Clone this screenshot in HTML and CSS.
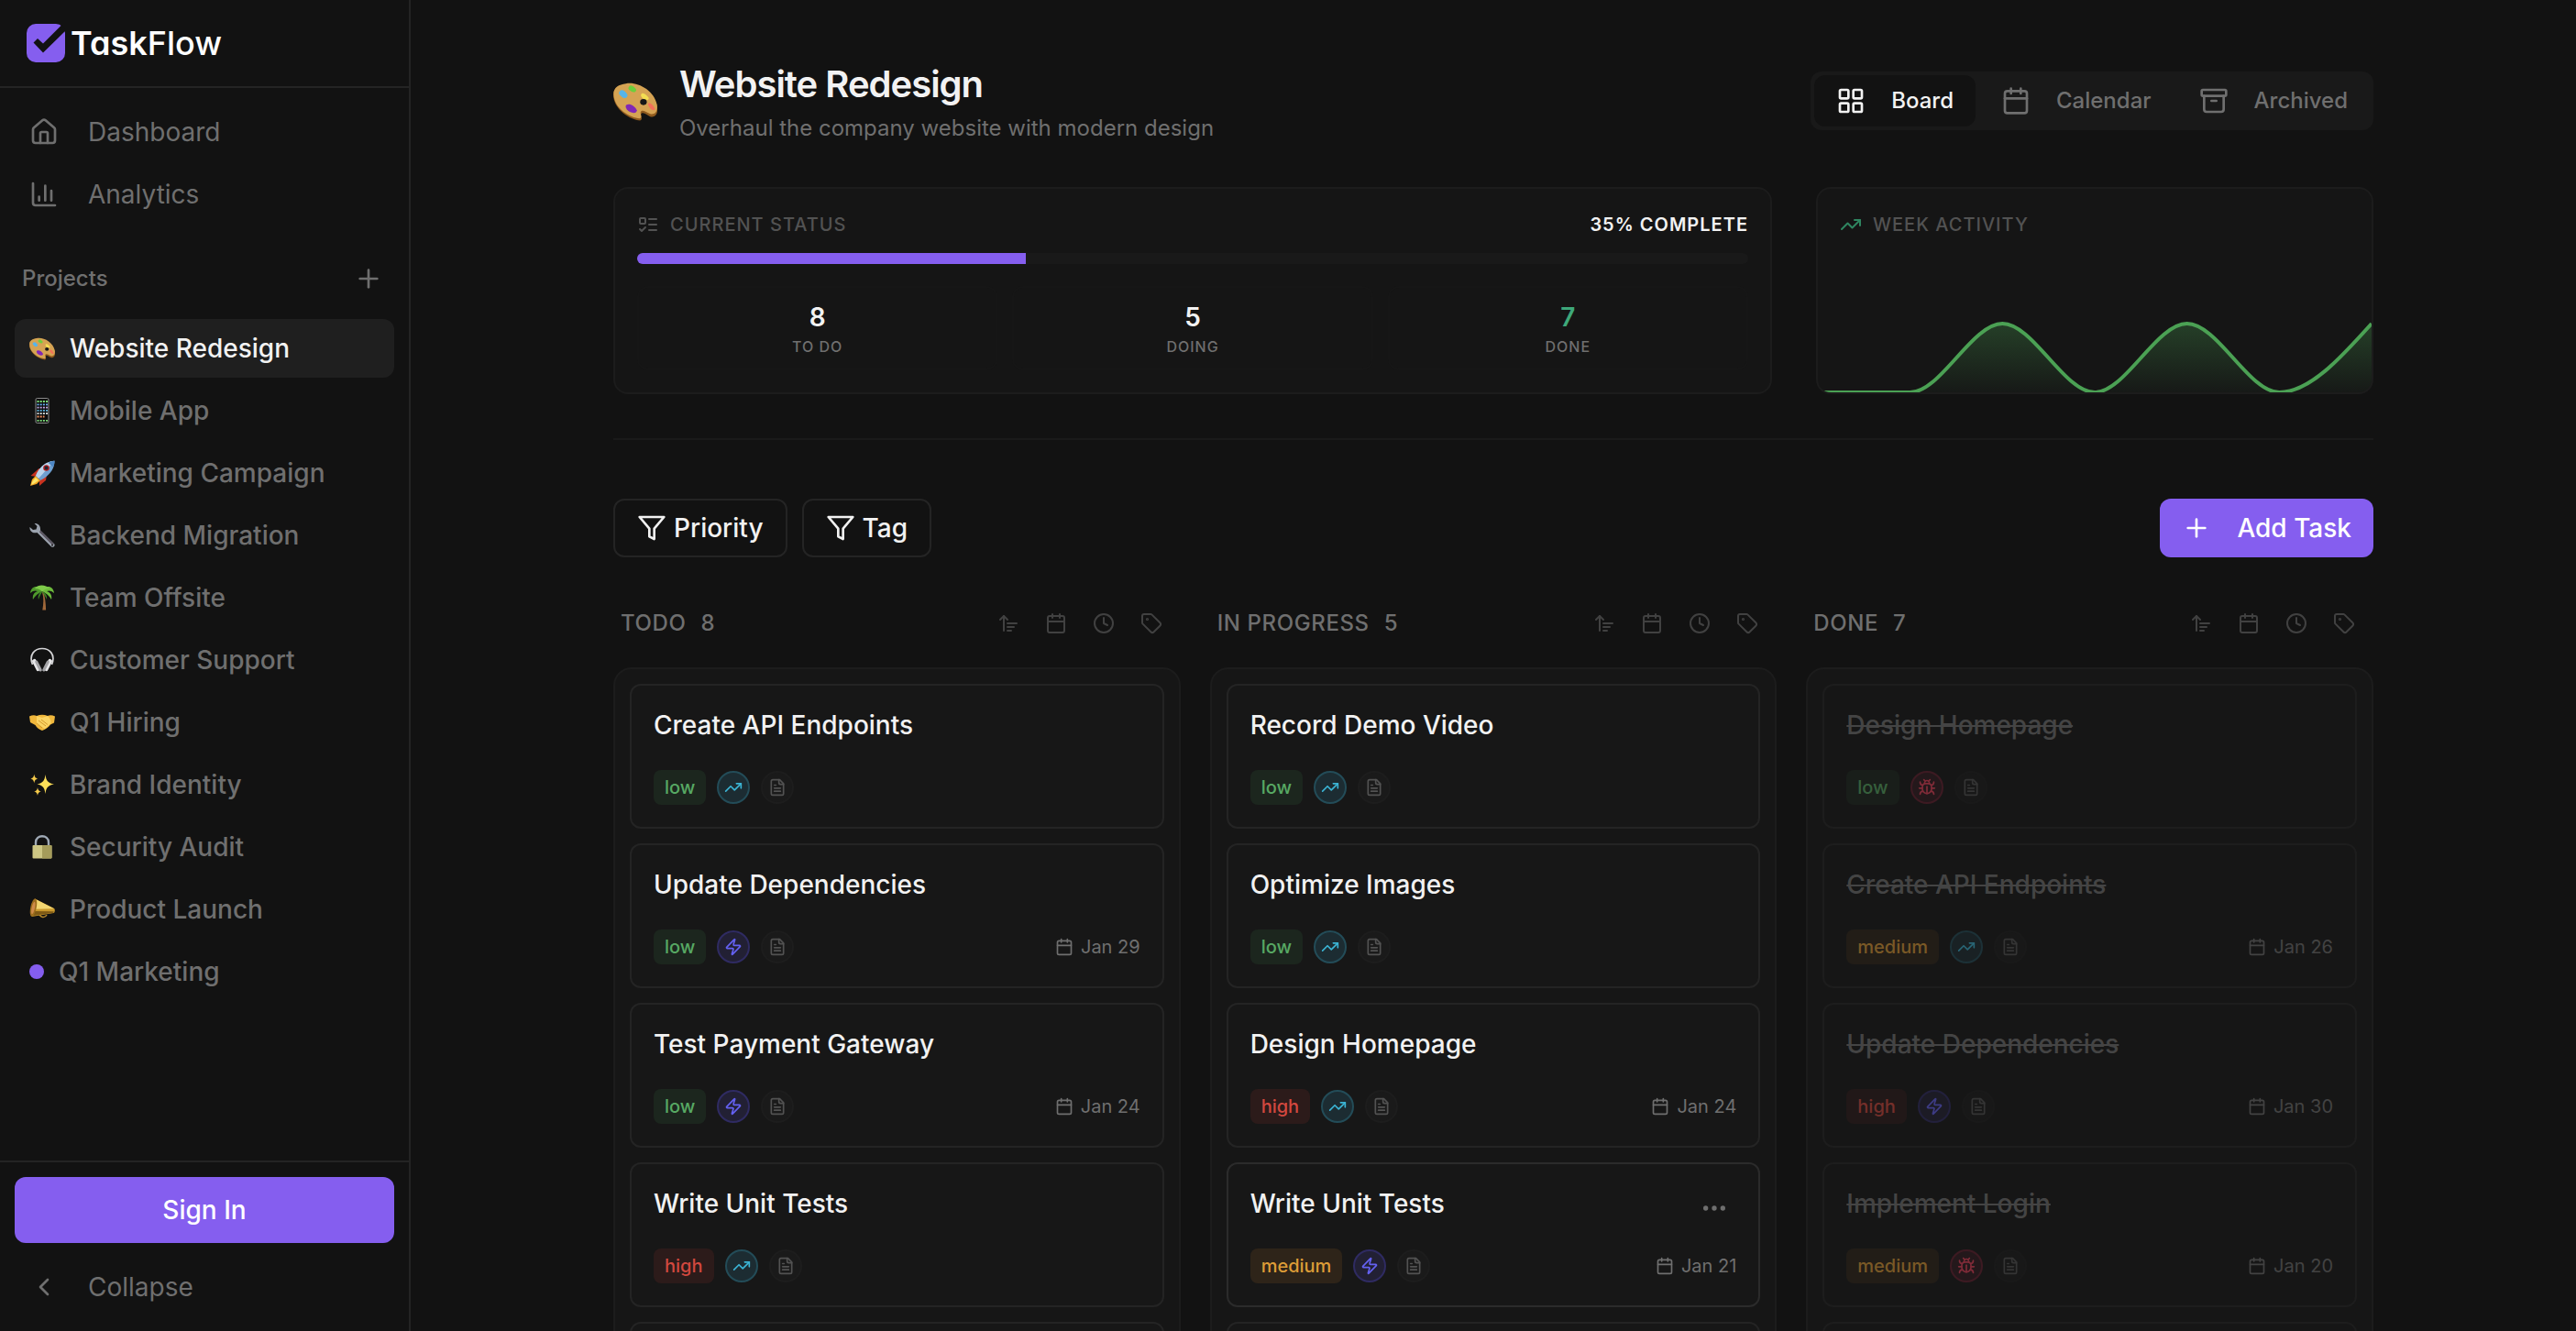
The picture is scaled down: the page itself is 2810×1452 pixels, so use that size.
FILE: index.html
```html
<!DOCTYPE html>
<html lang="en">
<head>
<meta charset="utf-8">
<meta name="viewport" content="width=device-width, initial-scale=1">
<title>TaskFlow – Website Redesign</title>
<link rel="stylesheet" href="styles.css">
</head>
<body>
<svg class="sprite" aria-hidden="true">
  <symbol id="i-home" viewBox="0 0 24 24"><path d="M15 21v-8a1 1 0 0 0-1-1h-4a1 1 0 0 0-1 1v8"/><path d="M3 10a2 2 0 0 1 .709-1.528l7-5.999a2 2 0 0 1 2.582 0l7 5.999A2 2 0 0 1 21 10v9a2 2 0 0 1-2 2H5a2 2 0 0 1-2-2z"/></symbol>
  <symbol id="i-chart" viewBox="0 0 24 24"><path d="M3 3v16a2 2 0 0 0 2 2h16"/><path d="M18 17V9"/><path d="M13 17V5"/><path d="M8 17v-3"/></symbol>
  <symbol id="i-plus" viewBox="0 0 24 24"><path d="M5 12h14"/><path d="M12 5v14"/></symbol>
  <symbol id="i-left" viewBox="0 0 24 24"><path d="m15 18-6-6 6-6"/></symbol>
  <symbol id="i-grid" viewBox="0 0 24 24"><rect width="7" height="7" x="3" y="3" rx="1"/><rect width="7" height="7" x="14" y="3" rx="1"/><rect width="7" height="7" x="14" y="14" rx="1"/><rect width="7" height="7" x="3" y="14" rx="1"/></symbol>
  <symbol id="i-cal" viewBox="0 0 24 24"><path d="M8 2v4"/><path d="M16 2v4"/><rect width="18" height="18" x="3" y="4" rx="2"/><path d="M3 10h18"/></symbol>
  <symbol id="i-archive" viewBox="0 0 24 24"><rect width="20" height="5" x="2" y="3" rx="1"/><path d="M4 8v11a2 2 0 0 0 2 2h12a2 2 0 0 0 2-2V8"/><path d="M10 12h4"/></symbol>
  <symbol id="i-todo" viewBox="0 0 24 24"><rect x="3" y="5" width="6" height="6" rx="1"/><path d="m3 17 2 2 4-4"/><path d="M13 6h8"/><path d="M13 12h8"/><path d="M13 18h8"/></symbol>
  <symbol id="i-trend" viewBox="0 0 24 24"><path d="M22 7 13.5 15.500l-5-5L2 17"/><path d="M16 7h6v6"/></symbol>
  <symbol id="i-filter" viewBox="0 0 24 24"><path d="M22 3H2l8 9.460V19l4 2v-8.540z"/></symbol>
  <symbol id="i-sort" viewBox="0 0 24 24"><path d="m3 8 4-4 4 4"/><path d="M7 4v16"/><path d="M11 12h10"/><path d="M11 16h7"/><path d="M11 20h4"/></symbol>
  <symbol id="i-clock" viewBox="0 0 24 24"><circle cx="12" cy="12" r="10"/><path d="M12 6v6l4 2"/></symbol>
  <symbol id="i-tag" viewBox="0 0 24 24"><path d="M12.586 2.586A2 2 0 0 0 11.172 2H4a2 2 0 0 0-2 2v7.172a2 2 0 0 0 .586 1.414l8.704 8.704a2.426 2.426 0 0 0 3.420 0l6.580-6.580a2.426 2.426 0 0 0 0-3.420z"/><circle cx="7.500" cy="7.500" r=".6"/></symbol>
  <symbol id="i-zap" viewBox="0 0 24 24"><path d="M4 14a1 1 0 0 1-.780-1.630l9.900-10.200a.5.5 0 0 1 .860.460l-1.920 6.020A1 1 0 0 0 13 10h7a1 1 0 0 1 .780 1.630l-9.900 10.200a.5.5 0 0 1-.860-.460l1.920-6.020A1 1 0 0 0 11 14z"/></symbol>
  <symbol id="i-doc" viewBox="0 0 24 24"><path d="M15 2H6a2 2 0 0 0-2 2v16a2 2 0 0 0 2 2h12a2 2 0 0 0 2-2V7Z"/><path d="M14 2v4a2 2 0 0 0 2 2h4"/><path d="M10 9H8"/><path d="M16 13H8"/><path d="M16 17H8"/></symbol>
  <symbol id="i-bug" viewBox="0 0 24 24"><path d="m8 2 1.880 1.880"/><path d="M14.120 3.880 16 2"/><path d="M9 7.130v-1a3.003 3.003 0 1 1 6 0v1"/><path d="M12 20c-3.300 0-6-2.700-6-6v-3a4 4 0 0 1 4-4h4a4 4 0 0 1 4 4v3c0 3.300-2.700 6-6 6"/><path d="M12 20v-9"/><path d="M6.530 9C4.600 8.800 3 7.100 3 5"/><path d="M6 13H2"/><path d="M3 21c0-2.100 1.700-3.900 3.800-4"/><path d="M20.970 5c0 2.100-1.600 3.800-3.500 4"/><path d="M22 13h-4"/><path d="M17.200 17c2.100.1 3.800 1.900 3.800 4"/></symbol>
  <symbol id="i-more" viewBox="0 0 24 24"><circle cx="5" cy="12" r="1"/><circle cx="12" cy="12" r="1"/><circle cx="19" cy="12" r="1"/></symbol>

  <symbol id="e-palette" viewBox="0 0 28 28"><path d="M8 3.500C15 2 26 8 28 17.500c.8 5-1.500 7.500-4.500 6.500-2-.7-4-3-5.500-2-1.500 1 1.500 3.500-1 4.500C11 26 0 19.500 0 10 0 6 3.500 4 8 3.500z" fill="#8f5a1e"/><path d="M8 3C15 1.500 26 7 27.800 16.500c.7 4.500-1.500 6.500-4.300 5.800-2-.6-4-2.800-5.700-1.800-1.500 1.200 1.300 3.800-1 4.700C11 25 .2 19 .2 9.500.2 5.500 3.500 3.500 8 3z" fill="#d5a353"/><path d="M4 8c2-2 3.500 0 5 2 .5 2-2 3-3.500 1.500S3 9.500 4 8z" fill="#57b5ea"/><path d="M10 5c1.500-1.800 3 .3 4.500 1.500.5 1.800-1.500 2.500-3 1.500S9 6.500 10 5z" fill="#6ccf3c"/><path d="M18 9.500c1.500-1 3 1 4.500 2.500.5 1.500-1.500 2-3 1S17 10.500 18 9.500z" fill="#f3dd52"/><path d="M22.500 15.500c1.500-.5 3 1.500 4 3.500 0 1.500-1.800 1-2.800 0s-2.200-3-1.200-3.500z" fill="#f4705a"/><path d="M8.500 16.500c2-1 5 .5 6.500 3.500 0 2-2.500 2-4.500 1s-3.500-3.500-2-4.500z" fill="#8127b5"/><ellipse cx="19.200" cy="14.800" rx="2.100" ry="1.900" fill="#171717"/></symbol>
  <symbol id="e-phone" viewBox="0 0 28 28"><rect x="7" y=".5" width="14" height="27" rx="1.500" fill="#0c0c0c" stroke="#8a8a8a"/><g fill="none" stroke-width="1.800" stroke-dasharray="2 1.200"><path d="M8.500 4h11.500" stroke="#7fe07a"/><path d="M8.500 7.300h11.500" stroke="#6ab5f6"/><path d="M8.500 10.600h11.500" stroke="#c8abe8"/><path d="M8.500 13.900h11.500" stroke="#5fb4dd"/><path d="M8.500 17.200h11.500" stroke="#dfe8e9"/><path d="M8.500 20.500h8" stroke="#f0905f"/><path d="M8.500 24.800h11.500" stroke="#7ee07a"/></g></symbol>
  <symbol id="e-rocket" viewBox="0 0 28 28"><path d="M1.500 17l9-8 3 1-6 8z" fill="#c8321f"/><path d="M11 22l8-6-1 6-7 6z" fill="#c8321f"/><path d="M7 17l5 5-4 4-7 2 2-7z" fill="#f7a823"/><path d="M7 19l3 3-4 3-4 2 1.500-4z" fill="#fbe66a"/><path d="M7 17C10 9 17 1.500 27.500.8 27.500 11 20 18 12 22z" fill="#6f9fd0"/><path d="M7 17C10 9 17 1.500 27.500.8L10 20z" fill="#bcd3ea"/><path d="M20.500 2.700C23 1.500 25.500 1 27.500.8c0 2.500-.5 4.700-1.500 6.700z" fill="#4d87c4"/><circle cx="18.500" cy="8.500" r="3.300" fill="#b01e20"/><circle cx="18.500" cy="8.500" r="1.900" fill="#1c2634"/></symbol>
  <symbol id="e-wrench" viewBox="0 0 28 28"><path d="M.5 5C0 9 3.500 12.500 8.500 11L24 26.500c2 1.200 4.500-.8 3.300-3L12 8.500C12.500 4 10 .8 5.500 1L8.500 4l-1 3.500L4 8z" fill="#9aa2ad"/><path d="M12 8.500l15 15-2 1-14-14z" fill="#5b5560"/><circle cx="25" cy="24.700" r="1" fill="#222"/></symbol>
  <symbol id="e-palm" viewBox="0 0 28 28"><path d="M14 8c2 6 1.500 13 .3 19.500h3.800C18 20 17 13 15.500 8z" fill="#a0683a"/><path d="M14 7C10-.5 2 1 1 9c3-3 6-3 8-2-4 1-6 5-5 9 2-4 6-7 10-9z" fill="#4f9a2c"/><path d="M14 7c4-7.500 12-6 13 2-3-3-6-3-8-2 4 1 6 5 5 9-2-4-6-7-10-9z" fill="#6dbb3c"/><path d="M6 4c4-5 12-4 16 0-4 0-6 1-8 4-2-3-4-4-8-4z" fill="#7fcb4a"/><path d="M12 8c-2 2-3 5-2 8 1-3 2-5 4-8 2 3 4 5 5 8 .5-4-1-7-4-8z" fill="#3c7f24"/></symbol>
  <symbol id="e-headphones" viewBox="0 0 28 28"><path d="M3.500 19C-1 8 6 1.500 14 1.500S29 8 24.500 19" fill="none" stroke="#d4d4d6" stroke-width="1.700"/><g fill="#e6e6e8"><rect x="5.200" y="12.500" width="4.600" height="14" rx="2" transform="rotate(-27 7.500 19.500)"/><rect x="18.200" y="12.500" width="4.600" height="14" rx="2" transform="rotate(27 20.500 19.500)"/></g><g fill="#a3a3a6"><rect x="8.500" y="14" width="3" height="13" rx="1.500" transform="rotate(-27 10 20.500)"/><rect x="16.500" y="14" width="3" height="13" rx="1.500" transform="rotate(27 18 20.500)"/></g></symbol>
  <symbol id="e-hands" viewBox="0 0 28 28"><path d="M0 7.500C3 6 6 6 8 7c4-1.800 8-1.800 12 0 2-1 5-1 8 .5l-1 7-4 2c-2 3-5 5-9 6.500C11 22 8 20 6.500 17L1 14z" fill="#f0b73c"/><path d="M8 7l6 2 6-2c2 2 4 5 3.500 8L17 21 8 16z" fill="#fbd464"/><path d="M10 12l8 6M13 11l7 5.500M8 15l6 5" stroke="#c98a1e" stroke-width=".8" fill="none"/></symbol>
  <symbol id="e-sparkle" viewBox="0 0 28 28"><path d="M17.500 3c1 7 2.500 9 9.500 10.500-7 1.500-8.500 3.500-9.500 10.500-1-7-2.500-9-9-10.500 6.500-1.500 8-3.500 9-10.500z" fill="#fddf58"/><path d="M5.300 2.500c.6 3.300 1.200 4.200 4 5-2.800.8-3.400 1.700-4 5-.6-3.300-1.200-4.200-4-5 2.800-.8 3.400-1.700 4-5zM9 17c.5 3 1.200 3.800 3.800 4.500C10.200 22.200 9.500 23 9 26c-.5-3-1.200-3.800-3.800-4.500C7.800 20.800 8.500 20 9 17z" fill="#f3c94a"/></symbol>
  <symbol id="e-lock" viewBox="0 0 28 28"><path d="M7 14V9c0-9 14-9 14 0v5" fill="none" stroke="#9fa9b5" stroke-width="2.400"/><rect x="3.500" y="12" width="21" height="14.500" rx="1" fill="#cdc684"/><path d="M14 12h9.500a1 1 0 0 1 1 1v12.500a1 1 0 0 1-1 1H14z" fill="#a59c5b"/></symbol>
  <symbol id="e-horn" viewBox="0 0 28 28"><path d="M11 19c1 4 6 5 8 1" fill="none" stroke="#b4862a" stroke-width="1.500"/><path d="M6 2.500L27 13c1.200.7 1 4.500-.5 5L2.500 22z" fill="#c9992d"/><path d="M7 3L27 13.200l-21 .5z" fill="#f2d671"/><path d="M6 16l20.500.3v1.500L4 21z" fill="#7f5a15"/><ellipse cx="4.500" cy="12" rx="3.200" ry="10" fill="#9c6d1d" transform="rotate(12 4.500 12)"/><ellipse cx="4.300" cy="12.500" rx="1.700" ry="7" fill="#cf8b4a" transform="rotate(12 4.300 12.500)"/></symbol>
</svg>

<div class="app">
  <aside class="sidebar">
    <div class="brand">
      <svg class="brand-mark" viewBox="0 0 42 42" aria-hidden="true"><rect width="42" height="42" rx="10" fill="#855eef"/><path d="M7.500 20.500 12 16l6 5.500L38.500 1 43 7 18 31.500z" fill="#121212"/></svg>
      <span class="brand-name"><b>Task</b>Flow</span>
    </div>
    <nav class="nav">
      <a class="row" href="#"><svg class="icon md"><use href="#i-home"/></svg>Dashboard</a>
      <a class="row" href="#"><svg class="icon md"><use href="#i-chart"/></svg>Analytics</a>
    </nav>
    <section class="projects">
      <div class="projects-head">
        <h2>Projects</h2>
        <button class="icon-btn" type="button" aria-label="Add project"><svg class="icon md"><use href="#i-plus"/></svg></button>
      </div>
      <div class="project-list">
        <a class="row project active" href="#"><svg class="emoji"><use href="#e-palette"/></svg>Website Redesign</a>
        <a class="row project" href="#"><svg class="emoji"><use href="#e-phone"/></svg>Mobile App</a>
        <a class="row project" href="#"><svg class="emoji"><use href="#e-rocket"/></svg>Marketing Campaign</a>
        <a class="row project" href="#"><svg class="emoji"><use href="#e-wrench"/></svg>Backend Migration</a>
        <a class="row project" href="#"><svg class="emoji"><use href="#e-palm"/></svg>Team Offsite</a>
        <a class="row project" href="#"><svg class="emoji"><use href="#e-headphones"/></svg>Customer Support</a>
        <a class="row project" href="#"><svg class="emoji"><use href="#e-hands"/></svg>Q1 Hiring</a>
        <a class="row project" href="#"><svg class="emoji"><use href="#e-sparkle"/></svg>Brand Identity</a>
        <a class="row project" href="#"><svg class="emoji"><use href="#e-lock"/></svg>Security Audit</a>
        <a class="row project" href="#"><svg class="emoji"><use href="#e-horn"/></svg>Product Launch</a>
        <a class="row project" href="#"><span class="dot"></span>Q1 Marketing</a>
      </div>
    </section>
    <div class="sidebar-foot">
      <button class="primary sign-in" type="button">Sign In</button>
      <button class="row collapse" type="button"><svg class="icon md"><use href="#i-left"/></svg>Collapse</button>
    </div>
  </aside>

  <main class="main">
    <div class="container">
      <header class="page-head">
        <svg class="emoji page-emoji"><use href="#e-palette"/></svg>
        <div class="page-title">
          <h1>Website Redesign</h1>
          <p>Overhaul the company website with modern design</p>
        </div>
        <div class="tabs">
          <button class="tab active" type="button"><svg class="icon md"><use href="#i-grid"/></svg>Board</button>
          <button class="tab" type="button"><svg class="icon md"><use href="#i-cal"/></svg>Calendar</button>
          <button class="tab" type="button"><svg class="icon md"><use href="#i-archive"/></svg>Archived</button>
        </div>
      </header>

      <section class="summary">
        <div class="panel status">
          <div class="panel-head">
            <svg class="icon sm"><use href="#i-todo"/></svg><h2>Current Status</h2>
            <span class="complete">35% Complete</span>
          </div>
          <div class="progress"><div class="progress-fill" style="width:35%"></div></div>
          <div class="stats">
            <div class="stat"><strong>8</strong><span>To Do</span></div>
            <div class="stat"><strong>5</strong><span>Doing</span></div>
            <div class="stat done"><strong>7</strong><span>Done</span></div>
          </div>
        </div>
        <div class="panel activity">
          <div class="panel-head">
            <svg class="icon sm trend"><use href="#i-trend"/></svg><h2>Week Activity</h2>
          </div>
          <svg class="chart" viewBox="0 0 600 80" preserveAspectRatio="none" aria-hidden="true">
            <defs><linearGradient id="fade" x1="0" y1="0" x2="0" y2="1"><stop offset="0" stop-color="#4ba154" stop-opacity=".3"/><stop offset="1" stop-color="#4ba154" stop-opacity=".03"/></linearGradient></defs>
            <path fill="url(#fade)" d="M0 80H100C133 80 167 5 200 5S267 80 300 80 367 5 400 5 467 80 500 80 567 42 600 5V80Z"/>
            <path class="chart-line" d="M0 80H100C133 80 167 5 200 5S267 80 300 80 367 5 400 5 467 80 500 80 567 42 600 5"/>
          </svg>
        </div>
      </section>

      <hr class="divider">

      <div class="toolbar">
        <button class="filter" type="button"><svg class="icon md"><use href="#i-filter"/></svg>Priority</button>
        <button class="filter" type="button"><svg class="icon md"><use href="#i-filter"/></svg>Tag</button>
        <button class="primary add" type="button"><svg class="icon md"><use href="#i-plus"/></svg>Add Task</button>
      </div>

      <section class="board">
        <div class="column">
          <div class="column-head">
            <h2>Todo</h2><span class="count">8</span>
            <div class="sorts">
              <button type="button" aria-label="Sort by priority"><svg class="icon sm"><use href="#i-sort"/></svg></button>
              <button type="button" aria-label="Sort by due date"><svg class="icon sm"><use href="#i-cal"/></svg></button>
              <button type="button" aria-label="Sort by created"><svg class="icon sm"><use href="#i-clock"/></svg></button>
              <button type="button" aria-label="Sort by tag"><svg class="icon sm"><use href="#i-tag"/></svg></button>
            </div>
          </div>
          <div class="lane">
            <article class="task">
              <h3>Create API Endpoints</h3>
              <div class="meta"><span class="badge low">low</span><span class="chip cyan"><svg class="icon xs"><use href="#i-trend"/></svg></span><span class="chip"><svg class="icon xs"><use href="#i-doc"/></svg></span></div>
            </article>
            <article class="task">
              <h3>Update Dependencies</h3>
              <div class="meta"><span class="badge low">low</span><span class="chip indigo"><svg class="icon xs"><use href="#i-zap"/></svg></span><span class="chip"><svg class="icon xs"><use href="#i-doc"/></svg></span><time class="due"><svg class="icon xs"><use href="#i-cal"/></svg>Jan 29</time></div>
            </article>
            <article class="task">
              <h3>Test Payment Gateway</h3>
              <div class="meta"><span class="badge low">low</span><span class="chip indigo"><svg class="icon xs"><use href="#i-zap"/></svg></span><span class="chip"><svg class="icon xs"><use href="#i-doc"/></svg></span><time class="due"><svg class="icon xs"><use href="#i-cal"/></svg>Jan 24</time></div>
            </article>
            <article class="task">
              <h3>Write Unit Tests</h3>
              <div class="meta"><span class="badge high">high</span><span class="chip cyan"><svg class="icon xs"><use href="#i-trend"/></svg></span><span class="chip"><svg class="icon xs"><use href="#i-doc"/></svg></span></div>
            </article>
            <article class="task"></article>
          </div>
        </div>

        <div class="column">
          <div class="column-head">
            <h2>In Progress</h2><span class="count">5</span>
            <div class="sorts">
              <button type="button" aria-label="Sort by priority"><svg class="icon sm"><use href="#i-sort"/></svg></button>
              <button type="button" aria-label="Sort by due date"><svg class="icon sm"><use href="#i-cal"/></svg></button>
              <button type="button" aria-label="Sort by created"><svg class="icon sm"><use href="#i-clock"/></svg></button>
              <button type="button" aria-label="Sort by tag"><svg class="icon sm"><use href="#i-tag"/></svg></button>
            </div>
          </div>
          <div class="lane">
            <article class="task">
              <h3>Record Demo Video</h3>
              <div class="meta"><span class="badge low">low</span><span class="chip cyan"><svg class="icon xs"><use href="#i-trend"/></svg></span><span class="chip"><svg class="icon xs"><use href="#i-doc"/></svg></span></div>
            </article>
            <article class="task">
              <h3>Optimize Images</h3>
              <div class="meta"><span class="badge low">low</span><span class="chip cyan"><svg class="icon xs"><use href="#i-trend"/></svg></span><span class="chip"><svg class="icon xs"><use href="#i-doc"/></svg></span></div>
            </article>
            <article class="task">
              <h3>Design Homepage</h3>
              <div class="meta"><span class="badge high">high</span><span class="chip cyan"><svg class="icon xs"><use href="#i-trend"/></svg></span><span class="chip"><svg class="icon xs"><use href="#i-doc"/></svg></span><time class="due"><svg class="icon xs"><use href="#i-cal"/></svg>Jan 24</time></div>
            </article>
            <article class="task hovered">
              <h3>Write Unit Tests</h3>
              <button class="more" type="button" aria-label="Task options"><svg class="icon md"><use href="#i-more"/></svg></button>
              <div class="meta"><span class="badge medium">medium</span><span class="chip indigo"><svg class="icon xs"><use href="#i-zap"/></svg></span><span class="chip"><svg class="icon xs"><use href="#i-doc"/></svg></span><time class="due"><svg class="icon xs"><use href="#i-cal"/></svg>Jan 21</time></div>
            </article>
            <article class="task"></article>
          </div>
        </div>

        <div class="column">
          <div class="column-head">
            <h2>Done</h2><span class="count">7</span>
            <div class="sorts">
              <button type="button" aria-label="Sort by priority"><svg class="icon sm"><use href="#i-sort"/></svg></button>
              <button type="button" aria-label="Sort by due date"><svg class="icon sm"><use href="#i-cal"/></svg></button>
              <button type="button" aria-label="Sort by created"><svg class="icon sm"><use href="#i-clock"/></svg></button>
              <button type="button" aria-label="Sort by tag"><svg class="icon sm"><use href="#i-tag"/></svg></button>
            </div>
          </div>
          <div class="lane">
            <article class="task finished">
              <h3>Design Homepage</h3>
              <div class="meta"><span class="badge low">low</span><span class="chip rose"><svg class="icon xs"><use href="#i-bug"/></svg></span><span class="chip"><svg class="icon xs"><use href="#i-doc"/></svg></span></div>
            </article>
            <article class="task finished">
              <h3>Create API Endpoints</h3>
              <div class="meta"><span class="badge medium">medium</span><span class="chip cyan"><svg class="icon xs"><use href="#i-trend"/></svg></span><span class="chip"><svg class="icon xs"><use href="#i-doc"/></svg></span><time class="due"><svg class="icon xs"><use href="#i-cal"/></svg>Jan 26</time></div>
            </article>
            <article class="task finished">
              <h3>Update Dependencies</h3>
              <div class="meta"><span class="badge high">high</span><span class="chip indigo"><svg class="icon xs"><use href="#i-zap"/></svg></span><span class="chip"><svg class="icon xs"><use href="#i-doc"/></svg></span><time class="due"><svg class="icon xs"><use href="#i-cal"/></svg>Jan 30</time></div>
            </article>
            <article class="task finished">
              <h3>Implement Login</h3>
              <div class="meta"><span class="badge medium">medium</span><span class="chip rose"><svg class="icon xs"><use href="#i-bug"/></svg></span><span class="chip"><svg class="icon xs"><use href="#i-doc"/></svg></span><time class="due"><svg class="icon xs"><use href="#i-cal"/></svg>Jan 20</time></div>
            </article>
            <article class="task finished"></article>
          </div>
        </div>
      </section>
    </div>
  </main>
</div>
</body>
</html>
```
FILE: styles.css
```css
:root {
  --bg: #121212;
  --panel: #151515;
  --lane: #161616;
  --task: #171717;
  --line: #242424;
  --line-soft: #1c1c1c;
  --text: #f2f2f2;
  --muted: #6f6f6f;
  --faint: #525252;
  --accent: #855eef;
}

* { box-sizing: border-box; margin: 0; }

body {
  background: var(--bg);
  color: var(--text);
  font: 400 28px/36px Inter, "Liberation Sans", sans-serif;
}

h1, h2, h3 { font-size: inherit; font-weight: inherit; }
a { color: inherit; text-decoration: none; }
button { background: none; border: 0; padding: 0; color: inherit; font: inherit; cursor: pointer; }

.sprite { display: none; }
.icon { flex: none; display: block; fill: none; stroke: currentColor; stroke-width: 2; stroke-linecap: round; stroke-linejoin: round; }
.md { width: 32px; height: 32px; }
.sm { width: 24px; height: 24px; }
.xs { width: 20px; height: 20px; }
.emoji { flex: none; width: 28px; height: 28px; }

.app { display: flex; height: 100vh; }

/* Sidebar */
.sidebar { flex: none; display: flex; flex-direction: column; width: 448px; border-right: 2px solid var(--line); color: var(--muted); }
.brand { display: flex; align-items: center; gap: 6px; height: 96px; padding: 0 29px; border-bottom: 2px solid var(--line); }
.brand-mark { width: 42px; height: 42px; }
.brand-name { color: #fff; font-size: 36px; font-weight: 500; line-height: 44px; font-feature-settings: "cv11"; }
.brand-name b { font-weight: 600; }
.nav { display: flex; flex-direction: column; gap: 4px; padding: 16px; }
.row { display: flex; align-items: center; gap: 32px; height: 64px; padding: 0 16px; border-radius: 12px; }
.projects { flex: 1; min-height: 0; padding: 16px; }
.projects-head { display: flex; align-items: center; justify-content: space-between; padding-left: 8px; margin-bottom: 16px; font-size: 24px; font-weight: 500; line-height: 32px; }
.icon-btn { display: grid; place-items: center; width: 56px; height: 56px; }
.project-list { display: flex; flex-direction: column; gap: 4px; }
.project { gap: 16px; font-weight: 500; }
.project.active { background: #1f1f1f; color: var(--text); }
.dot { width: 16px; height: 16px; border-radius: 50%; background: var(--accent); }
.sidebar-foot { display: flex; flex-direction: column; gap: 16px; padding: 16px; border-top: 2px solid var(--line); }
.primary { background: var(--accent); color: #fff; border-radius: 12px; font-weight: 500; }
.sign-in { height: 72px; }

/* Page */
.main { flex: 1; min-width: 0; overflow-y: auto; scrollbar-width: none; }
.container { max-width: 2048px; margin: 0 auto; padding: 64px; }
.page-head { display: flex; align-items: center; gap: 24px; margin-bottom: 48px; }
.page-emoji { width: 48px; height: 48px; }
.page-title { flex: 1; display: flex; flex-direction: column; gap: 4px; }
.page-title h1 { font-size: 40px; line-height: 56px; font-weight: 600; letter-spacing: -1px; }
.page-title p { color: var(--muted); font-size: 24px; line-height: 32px; }
.tabs { display: flex; gap: 4px; padding: 4px; border-radius: 12px; background: #191919; }
.tab { display: flex; align-items: center; gap: 28px; height: 56px; padding: 0 24px; border-radius: 12px; color: var(--muted); font-size: 24px; font-weight: 500; }
.tab.active { background: var(--bg); color: var(--text); }

.summary { display: grid; grid-template-columns: repeat(3, 1fr); gap: 48px; }
.panel { border: 2px solid var(--line-soft); border-radius: 16px; background: var(--panel); }
.status { grid-column: span 2; padding: 24px; }
.panel-head { display: flex; align-items: center; gap: 12px; color: var(--faint); font-size: 20px; line-height: 30px; font-weight: 500; letter-spacing: 1px; text-transform: uppercase; }
.complete { margin-left: auto; color: var(--text); font-weight: 600; }
.progress { height: 12px; margin: 16px 0 24px; border-radius: 6px; background: #191919; overflow: hidden; }
.progress-fill { height: 100%; background: var(--accent); }
.stats { display: grid; grid-template-columns: repeat(3, 1fr); gap: 16px; }
.stat { display: flex; flex-direction: column; align-items: center; gap: 4px; padding: 14px; border: 2px solid #161616; border-radius: 12px; }
.stat strong { font-weight: 600; }
.stat span { color: var(--muted); font-size: 16px; line-height: 20px; font-weight: 500; letter-spacing: 1px; text-transform: uppercase; }
.stat.done strong { color: #3ea87a; }
.activity { display: flex; flex-direction: column; justify-content: space-between; overflow: hidden; }
.activity .panel-head { padding: 24px 24px 0; }
.trend { color: #2f8560; }
.chart { display: block; width: 100%; height: 80px; }
.chart-line { fill: none; stroke: #4ba154; stroke-width: 4; vector-effect: non-scaling-stroke; }

.divider { height: 2px; margin: 48px 0 64px; border: 0; background: #1a1a1a; }

.toolbar { display: flex; gap: 16px; margin-bottom: 48px; font-weight: 500; }
.toolbar button { display: flex; align-items: center; height: 64px; }
.filter { gap: 8px; padding: 0 24px; border: 2px solid var(--line); border-radius: 12px; }
.add { gap: 28px; margin-left: auto; padding: 0 24px; }

/* Board */
.board { display: grid; grid-template-columns: repeat(3, 1fr); gap: 32px; }
.column { min-width: 0; }
.column-head { display: flex; align-items: center; height: 48px; padding: 0 8px; margin-bottom: 24px; color: var(--muted); font-size: 24px; font-weight: 500; letter-spacing: 0.025em; text-transform: uppercase; }
.count { margin-left: 16px; }
.sorts { display: flex; gap: 4px; margin-left: auto; color: #414141; }
.sorts button { display: grid; place-items: center; width: 48px; height: 48px; }
.lane { display: flex; flex-direction: column; gap: 16px; padding: 16px; border: 2px solid var(--line-soft); border-radius: 20px; background: var(--lane); }
.task { position: relative; display: flex; flex-direction: column; gap: 30px; min-height: 158px; padding: 24px; border: 2px solid var(--line); border-radius: 12px; background: var(--task); }
.task.hovered { border-color: #2b2b2b; }
.task h3 { font-weight: 500; line-height: 38px; }
.more { position: absolute; top: 24px; right: 24px; display: grid; place-items: center; width: 48px; height: 48px; color: var(--muted); }
.meta { display: flex; align-items: center; gap: 12px; height: 38px; font-size: 20px; }
.badge { padding: 0 12px; border-radius: 8px; line-height: 38px; font-weight: 500; }
.low { background: #1c261e; color: #57a863; }
.medium { background: #2e2419; color: #dd9c37; }
.high { background: #2c1b1a; color: #d2483f; }
.chip { display: grid; place-items: center; width: 36px; height: 36px; border: 2px solid #1d1d1d; border-radius: 50%; background: #1a1a1a; color: #525252; }
.chip.cyan { border-color: #234c58; background: #1c2c32; color: #3bb4d4; }
.chip.indigo { border-color: #2f2b62; background: #222034; color: #6461f1; }
.chip.rose { border-color: #641f2f; background: #331a20; color: #e8405a; }
.due { display: flex; align-items: center; gap: 8px; margin-left: auto; color: var(--muted); }
.finished { opacity: .5; }
.finished h3 { align-self: flex-start; color: #737373; text-decoration: line-through; }
```
